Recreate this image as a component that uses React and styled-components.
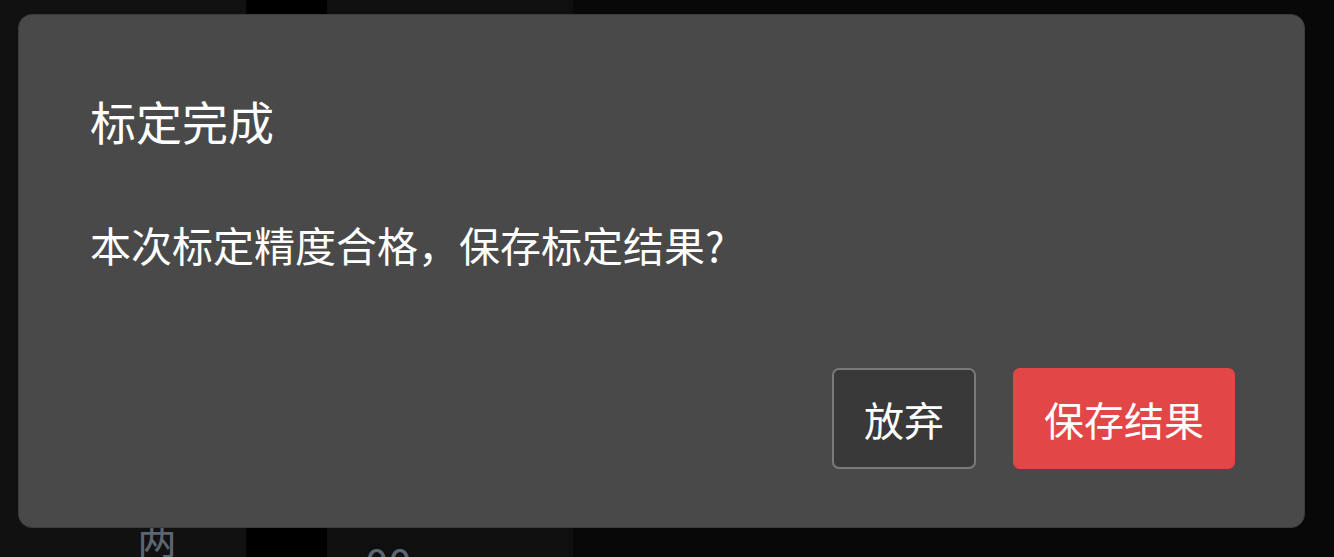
import React from "react";
import styled, { createGlobalStyle } from "styled-components";

const GlobalStyle = createGlobalStyle`
    html, body {
        margin: 0;
        padding: 0;
        background: #080808;
        font-family: "Noto Sans CJK SC", "Noto Sans", sans-serif;
        overflow: hidden;
    }
`

const StyledPage = styled.div`
    display: grid;
    grid-template-columns: 246px 81px 246px 1fr;
    width: 1334px;
    height: 557px;
`
const StyledColumn = styled.div`
    display: flex;
    flex-direction: column;
    justify-content: flex-end;
    align-items: flex-start;
    background-color: ${(p) => p.$bg};
    overflow: hidden;
`
const StyledFaintText = styled.div`
    color: #5b6672;
    font-size: ${(p) => p.$size || 40}px;
    line-height: 1;
    margin-bottom: ${(p) => p.$bottom || 0}px;
    padding-left: ${(p) => p.$left || 0}px;
`
const StyledOverlay = styled.div`
    position: fixed;
    inset: 0;
    padding: 14px 29px 29px 18px;
    display: flex;
`
const StyledDialog = styled.div`
    flex: 1;
    display: flex;
    flex-direction: column;
    background-color: #494949;
    border: 1px solid #3c3c3c;
    border-radius: 14px;
    padding: 0 69px 58px 71px;
    color: #ffffff;
`
const StyledTitle = styled.h2`
    margin: 73px 0 0;
    font-size: 46px;
    font-weight: 400;
    line-height: 1.4;
`
const StyledMessage = styled.p`
    margin: 64px 0 0;
    font-size: 41px;
    line-height: 1.4;
`
const StyledFooter = styled.div`
    margin-top: auto;
    display: flex;
    justify-content: flex-end;
    gap: 37px;
`
const StyledButton = styled.button`
    height: 101px;
    padding: 0 ${(p) => (p.$primary ? 29 : 30)}px;
    border-radius: 7px;
    border: 2px solid ${(p) => (p.$primary ? "#e34646" : "#7a7a7a")};
    background-color: ${(p) => (p.$primary ? "#e34646" : "#393939")};
    color: #ffffff;
    font-family: inherit;
    font-size: 40px;
    cursor: pointer;
`

const App = () => {
    return (
        <>
            <GlobalStyle />
            <StyledPage>
                <StyledColumn $bg="#111111">
                    <StyledFaintText $left={137}>两</StyledFaintText>
                </StyledColumn>
                <StyledColumn $bg="#000000" />
                <StyledColumn $bg="#0f0f0f">
                    <StyledFaintText $bottom={-26} $left={38} $size={42}>00</StyledFaintText>
                </StyledColumn>
                <StyledColumn $bg="#080808" />
            </StyledPage>

            <StyledOverlay>
                <StyledDialog>
                    <StyledTitle>标定完成</StyledTitle>
                    <StyledMessage>本次标定精度合格，保存标定结果?</StyledMessage>
                    <StyledFooter>
                        <StyledButton>放弃</StyledButton>
                        <StyledButton $primary>保存结果</StyledButton>
                    </StyledFooter>
                </StyledDialog>
            </StyledOverlay>
        </>
    )
}

export default App
